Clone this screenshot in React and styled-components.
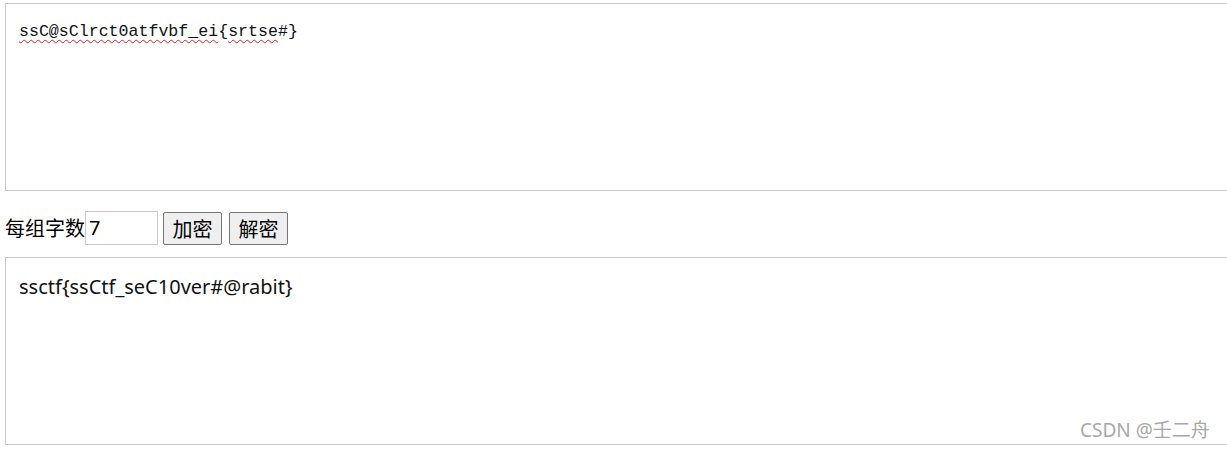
import React from "react";
import styled, { createGlobalStyle } from "styled-components";

const Global = createGlobalStyle`
  body {
    margin: 0;
    background: #fff;
    font-family: "Noto Sans", "Noto Sans CJK SC", sans-serif;
    overflow: hidden;
  }
`;

const Page = styled.div`
  padding: 3px 0 0 5px;
  width: 1240px;
`;

const Box = styled.div`
  position: relative;
  box-sizing: border-box;
  height: 188px;
  width: 1240px;
  border: 1px solid #c8c8c8;
  padding: ${(p) => (p.$mono ? "16px 13px" : "16px 13px")};
  font-family: ${(p) =>
    p.$mono
      ? '"Liberation Mono", "Noto Sans CJK SC", monospace'
      : '"Noto Sans", "Noto Sans CJK SC", sans-serif'};
  font-size: ${(p) => (p.$mono ? "16.6px" : "20px")};
  line-height: ${(p) => (p.$mono ? "24px" : "26px")};
  color: #111;
`;

const Misspelled = styled.span`
  text-decoration: underline wavy #e02020;
  text-decoration-thickness: 1px;
  text-underline-offset: 3px;
`;

const Controls = styled.div`
  display: flex;
  align-items: center;
  height: 34px;
  margin: 20px 0 12px;
  font-family: "Noto Sans CJK SC", sans-serif;
  font-size: 20px;
  color: #000;
`;

const Label = styled.span`
  line-height: 34px;
`;

const NumberInput = styled.div`
  box-sizing: border-box;
  width: 73px;
  height: 34px;
  border: 1px solid #c8c8c8;
  padding: 0 3px;
  font-family: "Noto Sans", "Noto Sans CJK SC", sans-serif;
  font-size: 20px;
  line-height: 32px;
  margin-right: 5px;
`;

const Button = styled.button`
  box-sizing: border-box;
  height: 33px;
  width: 59px;
  margin-right: 7px;
  padding: 0;
  border: 1px solid #767676;
  border-radius: 2px;
  background: #efefef;
  font-family: "Noto Sans CJK SC", sans-serif;
  font-size: 20px;
  color: #000;
`;

const Watermark = styled.span`
  position: absolute;
  left: 1074px;
  top: 161px;
  font-family: "Noto Sans", "Noto Sans CJK SC", sans-serif;
  font-size: 19px;
  color: #a8a8a8;
  line-height: 22px;
`;

export default function App() {
  return (
    <>
      <Global />
      <Page>
        <Box $mono>
          <Misspelled>ssC@sClrct0atfvbf_ei</Misspelled>
          {"{"}
          <Misspelled>srtse</Misspelled>
          {"#}"}
        </Box>
        <Controls>
          <Label>每组字数</Label>
          <NumberInput>7</NumberInput>
          <Button>加密</Button>
          <Button>解密</Button>
        </Controls>
        <Box>
          ssctf{"{"}ssCtf_seC10ver#@rabit{"}"}
          <Watermark>CSDN @壬二舟</Watermark>
        </Box>
      </Page>
    </>
  );
}
